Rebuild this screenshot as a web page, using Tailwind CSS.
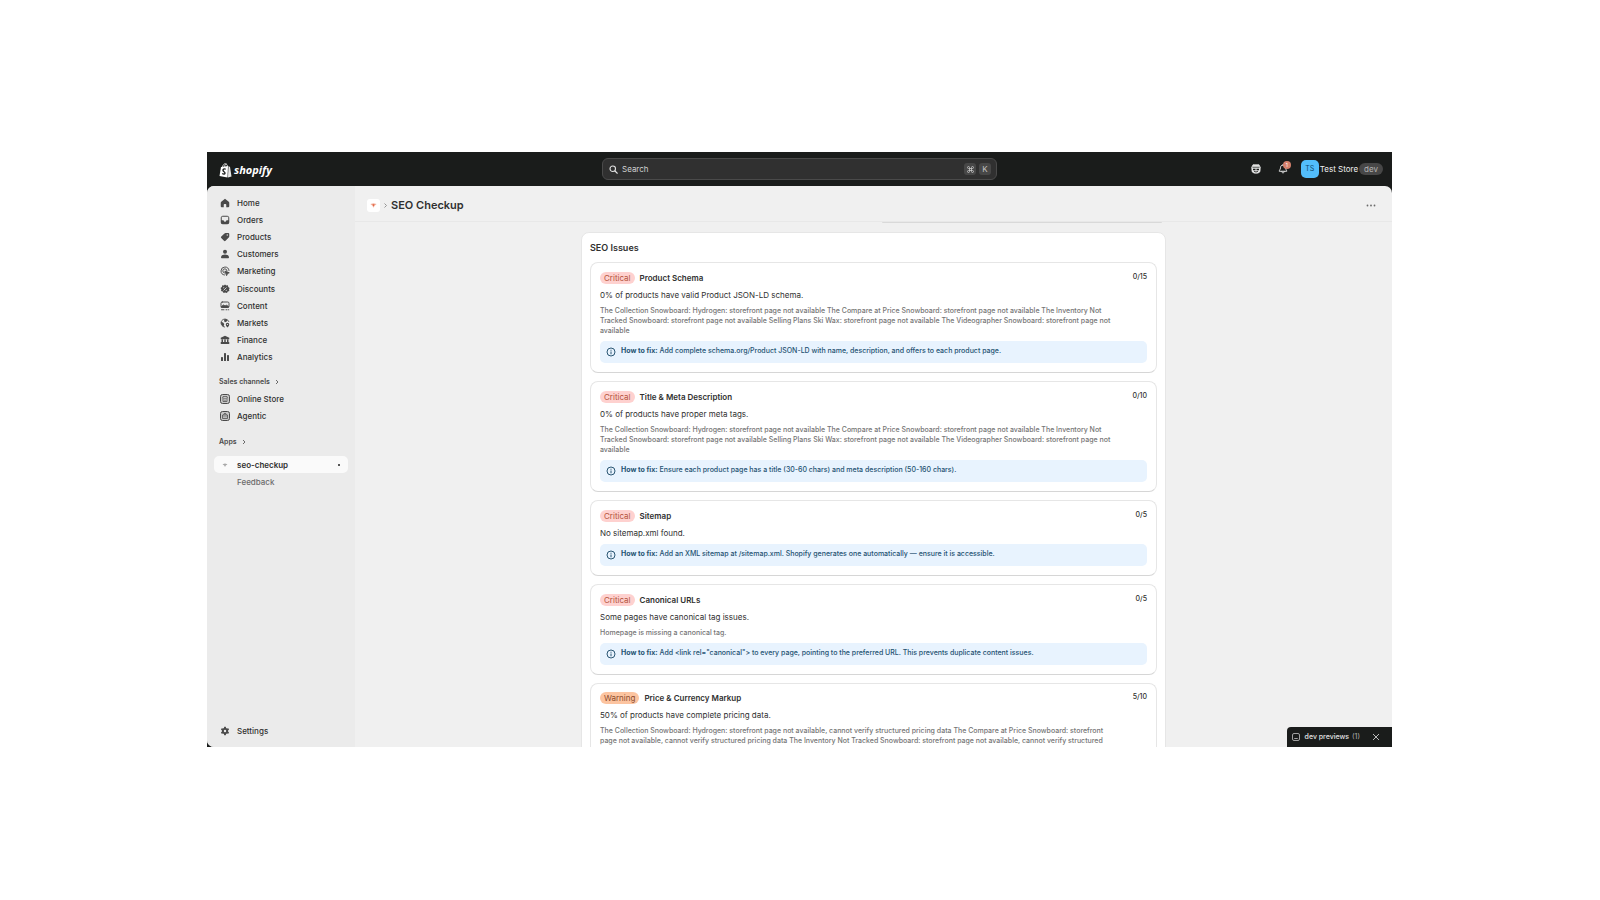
<!DOCTYPE html>
<html lang="en">
<head>
<meta charset="utf-8">
<meta name="viewport" content="width=device-width, initial-scale=1">
<title>SEO Checkup</title>
<script src="https://cdn.jsdelivr.net/npm/@tailwindcss/browser@4"></script>
</head>
<body class="h-screen bg-white pt-[152px] pb-[153px] pl-[207px] pr-[208px] font-['Inter',sans-serif] text-[8px] leading-3 text-[#303030]">
<div class="relative flex h-full flex-col overflow-hidden bg-[#1a1c1b]">

  <header class="grid h-[34px] shrink-0 grid-cols-[1fr_minmax(0,395px)_1fr] items-center">
    <a href="#" aria-label="Shopify" class="ml-3 flex items-center gap-[2px] pt-[2px] text-white">
      <svg class="h-[15px] w-[13px]" viewBox="0 0 26 30" aria-hidden="true">
        <path d="M4 8 18 6 17 29 1 26Z" fill="#fff"/>
        <path d="M19 6 22 8 25 27 18 29Z" fill="#e8e8e8"/>
        <path d="M7 8C8 3 11 1 13 1.500S17 4 17 7M11 7.500C11.500 4 13 2 15 2" fill="none" stroke="#fff" stroke-width="1.600"/>
        <path d="M13.500 12.500C10 11 7.500 12.500 8 15 8.500 17.500 12.500 17.500 12 20.500 11.500 23 8.500 22.500 6.500 21" fill="none" stroke="#1a1c1b" stroke-width="2.600"/>
      </svg>
      <span class="font-['Open_Sans',sans-serif] text-[11px] leading-[14px] font-bold italic">shopify</span>
    </a>
    <label class="flex h-[22px] items-center rounded-md border border-[#4a4a4a] bg-[#303030] pr-[5px] pl-[6px]">
      <svg class="mr-1 size-[9px] shrink-0" viewBox="0 0 18 18" fill="none" stroke="#e3e3e3" stroke-width="2.200" stroke-linecap="round" aria-hidden="true"><circle cx="7.500" cy="7.500" r="5.500"/><path d="m12 12 4.500 4.500"/></svg>
      <input type="search" aria-label="Search" placeholder="Search" class="min-w-0 flex-1 bg-transparent text-[8px] leading-3 text-white outline-none placeholder:text-[#d0d0d0]">
      <kbd class="mr-[3px] flex size-3 items-center justify-center rounded-[3px] bg-[#474747] font-['Inter',sans-serif] text-[#c4c4c4]">
        <svg class="size-[7px]" viewBox="0 0 14 14" fill="none" stroke="#c4c4c4" stroke-width="1.700" aria-hidden="true"><path d="M5 5H3a2 2 0 1 1 2-2v8a2 2 0 1 1-2-2h8a2 2 0 1 1-2 2V3a2 2 0 1 1 2 2Z"/></svg>
      </kbd>
      <kbd class="flex size-3 items-center justify-center rounded-[3px] bg-[#474747] font-['Inter',sans-serif] text-[8px] leading-3 text-[#c4c4c4]">K</kbd>
    </label>
    <div class="flex items-center justify-end pr-[9px]">
      <button type="button" aria-label="Sidekick" class="mr-[17px]">
        <svg class="block size-[10px]" viewBox="0 0 20 20" aria-hidden="true"><path d="M4 1.500h12l2.500 5-.5 8q-1 4-8 4t-8-4l-.5-8Z" fill="#e3e3e3" stroke="#e3e3e3" stroke-width="1.500" stroke-linejoin="round"/><path d="M3 6.500h14" stroke="#1a1c1b" stroke-width="1.400"/><path d="M4 9.500h5v3H4zM11 9.500h5v3h-5z" fill="#1a1c1b"/><path d="M6 14.500q4 3 8 0" fill="none" stroke="#1a1c1b" stroke-width="1.600"/></svg>
      </button>
      <button type="button" aria-label="Notifications, 1 unread" class="relative mr-[13px]">
        <svg class="block size-[10px]" viewBox="0 0 20 20" fill="none" stroke="#e3e3e3" stroke-width="2" stroke-linejoin="round" stroke-linecap="round" aria-hidden="true"><path d="M10 2C6.500 2 5 4.500 5 7.500 5 11 2.500 12 2.500 14.500h15C17.500 12 15 11 15 7.500 15 4.500 13.500 2 10 2ZM7.500 15c0 4 5 4 5 0"/></svg>
        <span class="absolute -top-[3px] left-[5px] flex size-2 items-center justify-center rounded-full bg-[#d4806c] text-[5px] leading-none text-white">1</span>
      </button>
      <button type="button" class="flex items-center">
        <span class="mr-px flex size-[18px] items-center justify-center rounded-[5px] bg-[#52bdfb] text-[7px] text-[#0c4a6e]">TS</span>
        <span class="mr-px text-[#f0f0f0]">Test Store</span>
        <span class="rounded-full bg-[#474747] px-[5px] text-[#b5b5b5]">dev</span>
      </button>
    </div>
  </header>

  <div class="flex min-h-0 flex-1 overflow-hidden rounded-t-[7px] rounded-bl-[7px] bg-[#f0f0f0]">
    <nav aria-label="Main" class="flex w-[148px] shrink-0 flex-col bg-[#ebebeb] px-[7px] py-2 font-medium">
      <ul class="flex h-[172px] flex-col justify-between">
        <li><a href="#" class="flex h-[17px] items-center gap-[7px] pl-[6px]"><svg class="size-[10px]" viewBox="0 0 20 20" fill="#4a4a4a" aria-hidden="true"><path d="M10 1.500 2.500 7.500Q1.500 8.500 1.500 10v6.500Q1.500 18.500 3.500 18.500H7.500V13.500q0-1.500 1.500-1.500h2q1.500 0 1.500 1.500v5h4q2 0 2-2V10q0-1.500-1-2.500Z"/></svg>Home</a></li>
        <li><a href="#" class="flex h-[17px] items-center gap-[7px] pl-[6px]"><svg class="size-[10px]" viewBox="0 0 20 20" aria-hidden="true"><rect x="2.500" y="2.500" width="15" height="15" rx="3" fill="none" stroke="#4a4a4a" stroke-width="2"/><path d="M2 10.500h5q1 3 3 3t3-3h5v5q0 2.500-2.500 2.500h-11Q2 18 2 15.500Z" fill="#4a4a4a"/></svg>Orders</a></li>
        <li><a href="#" class="flex h-[17px] items-center gap-[7px] pl-[6px]"><svg class="size-[10px]" viewBox="0 0 20 20" aria-hidden="true"><path d="M11 2h5.500q2 0 2 2V9q0 1-1 2l-6.500 6.500q-1.500 1.500-3 0L2.500 12q-1.500-1.500 0-3L9 3q1-1 2-1Z" fill="#4a4a4a"/><circle cx="14.500" cy="6" r="1.300" fill="#ebebeb"/></svg>Products</a></li>
        <li><a href="#" class="flex h-[17px] items-center gap-[7px] pl-[6px]"><svg class="size-[10px]" viewBox="0 0 20 20" fill="#4a4a4a" aria-hidden="true"><circle cx="10" cy="5.500" r="4"/><path d="M2 17q0-6 8-6t8 6q0 1.500-1.500 1.500h-13Q2 18.500 2 17Z"/></svg>Customers</a></li>
        <li><a href="#" class="flex h-[17px] items-center gap-[7px] pl-[6px]"><svg class="size-[10px]" viewBox="0 0 20 20" fill="none" stroke="#4a4a4a" stroke-width="1.900" stroke-linecap="round" aria-hidden="true"><path d="M18 9A8 8 0 1 0 9 18M14 9.500A4.200 4.200 0 1 0 9 14"/><path d="m10.500 10.500 8 3-3.500 1.500-1.500 3.500Z" fill="#4a4a4a" stroke-linejoin="round"/></svg>Marketing</a></li>
        <li><a href="#" class="flex h-[17px] items-center gap-[7px] pl-[6px]"><svg class="size-[10px]" viewBox="0 0 20 20" aria-hidden="true"><path d="m10 1 2.500 2.200 3.300-.5.700 3.300 2.800 1.800L18 10.800l.8 3.200-3.200 1.200-1.700 2.900-3.400-.9-3.300.9-1.700-2.900L2 14l.8-3.200L1 7.800 3.800 6l.7-3.300 3.300.5Z" fill="#4a4a4a"/><path d="m7 13 6-6" stroke="#ebebeb" stroke-width="1.600"/><circle cx="7.500" cy="7.500" r="1.200" fill="#ebebeb"/><circle cx="12.500" cy="12.500" r="1.200" fill="#ebebeb"/></svg>Discounts</a></li>
        <li><a href="#" class="flex h-[17px] items-center gap-[7px] pl-[6px]"><svg class="size-[10px]" viewBox="0 0 20 20" fill="none" stroke="#4a4a4a" stroke-width="1.900" stroke-linecap="round" aria-hidden="true"><rect x="2" y="2" width="16" height="11" rx="2.500"/><path d="m3 11 4-3 3 2 3-1.500 4 2.500v1.500H3Z" fill="#4a4a4a"/><path d="M3 17.500h5M12 17.500h2M17 17.500h.5"/></svg>Content</a></li>
        <li><a href="#" class="flex h-[17px] items-center gap-[7px] pl-[6px]"><svg class="size-[10px]" viewBox="0 0 20 20" aria-hidden="true"><path d="M9 18A8 8 0 1 1 17.500 7" fill="none" stroke="#4a4a4a" stroke-width="1.900" stroke-linecap="round"/><path d="M2 7.500 6 9l2.500 3L7 17.500Q2 15 2 7.500ZM9 2l6 1-1.500 4L10 8.500 8 6Z" fill="#4a4a4a"/><path d="M15 9.500a3.500 3.500 0 0 1 3.500 3.500q0 3-3.500 6-3.500-3-3.500-6A3.500 3.500 0 0 1 15 9.500Z" fill="#4a4a4a"/><circle cx="15" cy="13" r="1.200" fill="#ebebeb"/></svg>Markets</a></li>
        <li><a href="#" class="flex h-[17px] items-center gap-[7px] pl-[6px]"><svg class="size-[10px]" viewBox="0 0 20 20" fill="#4a4a4a" aria-hidden="true"><path d="M10 1.500 18.500 5.500v3h-17v-3ZM3 9h3v5.500H3ZM8.500 9h3v5.500h-3ZM14 9h3v5.500h-3ZM1.500 14h17v4h-17Z"/></svg>Finance</a></li>
        <li><a href="#" class="flex h-[17px] items-center gap-[7px] pl-[6px]"><svg class="size-[10px]" viewBox="0 0 20 20" fill="#4a4a4a" aria-hidden="true"><rect x="2" y="10" width="4" height="8" rx="1.200"/><rect x="8" y="2" width="4" height="16" rx="1.200"/><rect x="14" y="6" width="4" height="12" rx="1.200"/></svg>Analytics</a></li>
      </ul>
      <button type="button" class="mt-[9px] flex h-[14px] items-center gap-1 pl-[5px] text-[7px] leading-[10px] font-semibold text-[#4a4a4a]">Sales channels <svg class="size-[6px]" viewBox="0 0 12 12" fill="none" stroke="#4a4a4a" stroke-width="1.600" aria-hidden="true"><path d="m4 2 4 4-4 4"/></svg></button>
      <ul class="mt-px">
        <li><a href="#" class="flex h-[17px] items-center gap-[7px] pl-[6px]"><svg class="size-[10px]" viewBox="0 0 20 20" fill="none" stroke="#4a4a4a" stroke-width="2" aria-hidden="true"><rect x="1" y="1" width="18" height="18" rx="4" fill="#c8c8c8"/><path d="M5 8.500 6 5h8l1 3.500q-1 2-2.500 0-1.200 2-2.500 0-1.300 2-2.500 0-1.500 2-2.500 0ZM6 10v5h8v-5M10 15v-3" stroke-width="1.400"/></svg>Online Store</a></li>
        <li><a href="#" class="flex h-[17px] items-center gap-[7px] pl-[6px]"><svg class="size-[10px]" viewBox="0 0 20 20" fill="none" stroke="#4a4a4a" stroke-width="2" aria-hidden="true"><rect x="1" y="1" width="18" height="18" rx="4" fill="#c8c8c8"/><path d="M5 8h10v7H5ZM7.500 8q0-3.500 2.500-3.500T12.500 8M8 10.500v2M12 10.500v2" stroke-width="1.500"/></svg>Agentic</a></li>
      </ul>
      <button type="button" class="mt-[11px] flex h-[14px] items-center gap-1 pl-[5px] text-[7px] leading-[10px] font-semibold text-[#4a4a4a]">Apps <svg class="size-[6px]" viewBox="0 0 12 12" fill="none" stroke="#4a4a4a" stroke-width="1.600" aria-hidden="true"><path d="m4 2 4 4-4 4"/></svg></button>
      <ul class="mt-[7px]">
        <li><a href="#" aria-current="page" class="flex h-[17px] items-center gap-[7px] rounded-[5px] bg-[#fafafa] pr-2 pl-[6px] font-semibold"><svg class="size-[10px]" viewBox="0 0 20 20" aria-hidden="true"><path d="M5 8.500 10 7l5 1.500L11.500 11 10 14 8.500 11Z" fill="#a8a8a8"/></svg>seo-checkup<span class="ml-auto size-[2px] rounded-full bg-[#1f1f1f]"></span></a></li>
        <li><a href="#" class="flex h-[17px] items-center pl-[23px] text-[#6b6b6b]">Feedback</a></li>
      </ul>
      <a href="#" class="mt-auto flex h-[17px] items-center gap-[7px] pl-[6px]"><svg class="size-[10px]" viewBox="0 0 20 20" aria-hidden="true"><path d="M8.500 1.500h3l.7 2.600 1.800 1 2.600-.8 1.500 2.600-2 1.900v2.400l2 1.900-1.500 2.600-2.600-.8-1.800 1-.7 2.600h-3l-.7-2.600-1.800-1-2.600.8-1.500-2.600 2-1.900V8.800l-2-1.900 1.500-2.600 2.600.8 1.800-1Z" fill="#4a4a4a"/><circle cx="10" cy="10" r="2.400" fill="#ebebeb"/></svg>Settings</a>
    </nav>

    <main class="flex min-w-0 flex-1 flex-col">
      <div class="flex h-[36px] shrink-0 items-center border-b border-[#e8e8e8] pt-[3px] pr-4 pl-3">
        <span class="mr-[2px] flex size-[13px] items-center justify-center rounded-[3px] bg-white"><svg class="size-[9px]" viewBox="0 0 20 20" aria-hidden="true"><path d="M3 6.500 10 5l7 1.500-4.500 4L10 15l-2.500-4.500Z" fill="#f3b3a0"/><path d="M7.500 7h5L10 12Z" fill="#e0603c"/></svg></span>
        <svg class="mr-[2px] size-[7px]" viewBox="0 0 14 14" fill="none" stroke="#8a8a8a" stroke-width="1.800" aria-hidden="true"><path d="m5 3 4 4-4 4"/></svg>
        <h1 class="text-[11px] leading-4 font-semibold">SEO Checkup</h1>
        <button type="button" aria-label="More actions" class="ml-auto"><svg class="block h-[3px] w-[10px]" viewBox="0 0 20 6" fill="#6a6a6a" aria-hidden="true"><circle cx="3" cy="3" r="1.800"/><circle cx="10" cy="3" r="1.800"/><circle cx="17" cy="3" r="1.800"/></svg></button>
      </div>
      <div class="min-h-0 flex-1 overflow-hidden">
        <div class="mx-auto w-full max-w-[585px]">
          <div class="mr-1 ml-auto h-px w-[280px] rounded-b bg-[#d9d9d9]"></div>
          <section class="mt-[9px] rounded-lg border border-[#e6e6e6] bg-white p-2">
            <h2 class="mt-px mb-2 text-[9px] font-semibold">SEO Issues</h2>
            <div class="flex flex-col gap-2">

              <article class="flex flex-col gap-[5px] rounded-lg border border-[#e6e6e6] border-b-[#d6d6d6] p-[9px]">
                <div class="flex h-3 items-center gap-[5px]"><span class="rounded-full bg-[#fed1cf] px-1 text-[#b4533a]">Critical</span><h3 class="font-semibold">Product Schema</h3><span class="mb-[2px] ml-auto text-[7px] font-medium">0/15</span></div>
                <p>0% of products have valid Product JSON-LD schema.</p>
                <p class="pr-8 text-[7px] leading-[10px] font-medium text-[#757575]">The Collection Snowboard: Hydrogen: storefront page not available The Compare at Price Snowboard: storefront page not available The Inventory Not Tracked Snowboard: storefront page not available Selling Plans Ski Wax: storefront page not available The Videographer Snowboard: storefront page not available</p>
                <div class="flex h-[22px] items-center gap-[5px] rounded-[5px] bg-[#e8f3fe] px-[6px] text-[7px] font-medium text-[#245272]"><svg class="size-[10px] shrink-0" viewBox="0 0 20 20" fill="none" stroke="#154564" stroke-width="1.800" aria-hidden="true"><circle cx="10" cy="10" r="8"/><path d="M10 9v5.500M10 5.500v2"/></svg><p class="mb-[2px]"><strong class="font-bold">How to fix:</strong> Add complete schema.org/Product JSON-LD with name, description, and offers to each product page.</p></div>
              </article>

              <article class="flex flex-col gap-[5px] rounded-lg border border-[#e6e6e6] border-b-[#d6d6d6] p-[9px]">
                <div class="flex h-3 items-center gap-[5px]"><span class="rounded-full bg-[#fed1cf] px-1 text-[#b4533a]">Critical</span><h3 class="font-semibold">Title &amp; Meta Description</h3><span class="mb-[2px] ml-auto text-[7px] font-medium">0/10</span></div>
                <p>0% of products have proper meta tags.</p>
                <p class="pr-8 text-[7px] leading-[10px] font-medium text-[#757575]">The Collection Snowboard: Hydrogen: storefront page not available The Compare at Price Snowboard: storefront page not available The Inventory Not Tracked Snowboard: storefront page not available Selling Plans Ski Wax: storefront page not available The Videographer Snowboard: storefront page not available</p>
                <div class="flex h-[22px] items-center gap-[5px] rounded-[5px] bg-[#e8f3fe] px-[6px] text-[7px] font-medium text-[#245272]"><svg class="size-[10px] shrink-0" viewBox="0 0 20 20" fill="none" stroke="#154564" stroke-width="1.800" aria-hidden="true"><circle cx="10" cy="10" r="8"/><path d="M10 9v5.500M10 5.500v2"/></svg><p class="mb-[2px]"><strong class="font-bold">How to fix:</strong> Ensure each product page has a title (30-60 chars) and meta description (50-160 chars).</p></div>
              </article>

              <article class="flex flex-col gap-[5px] rounded-lg border border-[#e6e6e6] border-b-[#d6d6d6] p-[9px]">
                <div class="flex h-3 items-center gap-[5px]"><span class="rounded-full bg-[#fed1cf] px-1 text-[#b4533a]">Critical</span><h3 class="font-semibold">Sitemap</h3><span class="mb-[2px] ml-auto text-[7px] font-medium">0/5</span></div>
                <p>No sitemap.xml found.</p>
                <div class="flex h-[22px] items-center gap-[5px] rounded-[5px] bg-[#e8f3fe] px-[6px] text-[7px] font-medium text-[#245272]"><svg class="size-[10px] shrink-0" viewBox="0 0 20 20" fill="none" stroke="#154564" stroke-width="1.800" aria-hidden="true"><circle cx="10" cy="10" r="8"/><path d="M10 9v5.500M10 5.500v2"/></svg><p class="mb-[2px]"><strong class="font-bold">How to fix:</strong> Add an XML sitemap at /sitemap.xml. Shopify generates one automatically — ensure it is accessible.</p></div>
              </article>

              <article class="flex flex-col gap-[5px] rounded-lg border border-[#e6e6e6] border-b-[#d6d6d6] p-[9px]">
                <div class="flex h-3 items-center gap-[5px]"><span class="rounded-full bg-[#fed1cf] px-1 text-[#b4533a]">Critical</span><h3 class="font-semibold">Canonical URLs</h3><span class="mb-[2px] ml-auto text-[7px] font-medium">0/5</span></div>
                <p>Some pages have canonical tag issues.</p>
                <p class="pr-8 text-[7px] leading-[10px] font-medium text-[#757575]">Homepage is missing a canonical tag.</p>
                <div class="flex h-[22px] items-center gap-[5px] rounded-[5px] bg-[#e8f3fe] px-[6px] text-[7px] font-medium text-[#245272]"><svg class="size-[10px] shrink-0" viewBox="0 0 20 20" fill="none" stroke="#154564" stroke-width="1.800" aria-hidden="true"><circle cx="10" cy="10" r="8"/><path d="M10 9v5.500M10 5.500v2"/></svg><p class="mb-[2px]"><strong class="font-bold">How to fix:</strong> Add &lt;link rel="canonical"&gt; to every page, pointing to the preferred URL. This prevents duplicate content issues.</p></div>
              </article>

              <article class="flex flex-col gap-[5px] rounded-lg border border-[#e6e6e6] border-b-[#d6d6d6] px-[9px] pt-2 pb-[9px]">
                <div class="flex h-3 items-center gap-[5px]"><span class="rounded-full bg-[#fcc4a0] px-1 text-[#8a4a2c]">Warning</span><h3 class="font-semibold">Price &amp; Currency Markup</h3><span class="mb-[2px] ml-auto text-[7px] font-medium">5/10</span></div>
                <p>50% of products have complete pricing data.</p>
                <p class="pr-8 text-[7px] leading-[10px] font-medium text-[#757575]">The Collection Snowboard: Hydrogen: storefront page not available, cannot verify structured pricing data The Compare at Price Snowboard: storefront page not available, cannot verify structured pricing data The Inventory Not Tracked Snowboard: storefront page not available, cannot verify structured</p>
              </article>
            </div>
          </section>
        </div>
      </div>
    </main>
  </div>

  <aside aria-label="Dev previews" class="absolute right-0 bottom-0 flex h-5 items-center rounded-tl-[4px] bg-[#1a1c1b] pr-3 pl-[5px] text-[7px] text-[#e3e3e3]">
    <svg class="mr-[5px] size-[8px]" viewBox="0 0 16 16" fill="none" stroke="#c4c4c4" stroke-width="1.600" aria-hidden="true"><rect x="1" y="1" width="14" height="14" rx="3"/><path d="M4.500 11h7"/></svg>
    <span class="font-medium">dev previews</span><span class="ml-[3px] text-[#b5b5b5]">(1)</span>
    <button type="button" aria-label="Close" class="ml-3"><svg class="block size-[8px]" viewBox="0 0 16 16" stroke="#e3e3e3" stroke-width="1.600" aria-hidden="true"><path d="m2 2 12 12M14 2 2 14"/></svg></button>
  </aside>
</div>
</body>
</html>
